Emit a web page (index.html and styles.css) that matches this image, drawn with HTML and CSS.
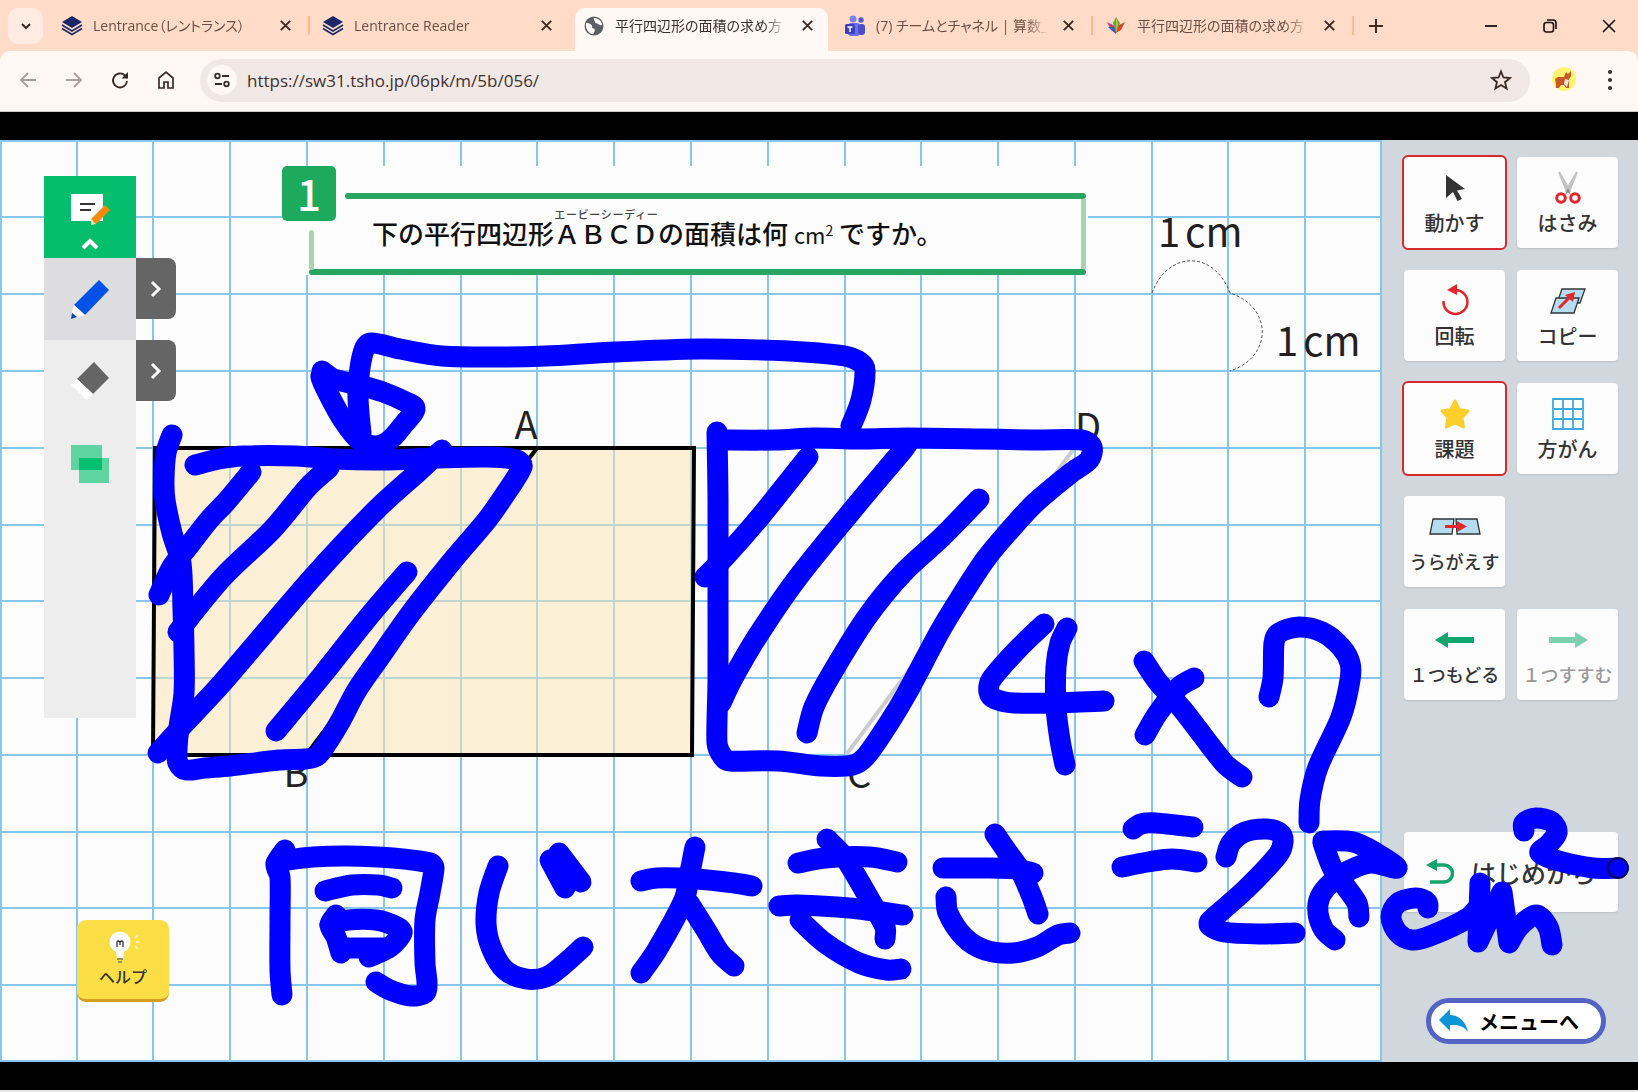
FILE: index.html
```html
<!DOCTYPE html>
<html lang="ja">
<head>
<meta charset="utf-8">
<meta name="viewport" content="width=device-width, initial-scale=1">
<title>平行四辺形の面積の求め方</title>
<link rel="stylesheet" href="styles.css">
</head>
<body>
<svg width="0" height="0" class="defs" aria-hidden="true">
  <symbol id="i-close" viewBox="0 0 16 16"><path d="M3 3L13 13M13 3L3 13" fill="none" stroke="currentColor" stroke-width="2"/></symbol>
  <symbol id="i-layers" viewBox="0 0 22 22"><path d="M11 1L21 7L11 13L1 7Z" fill="#1b2a66"/><path d="M1 10L11 16L21 10M1 13.500L11 19.500L21 13.500" fill="none" stroke="#1b2a66" stroke-width="1.600"/></symbol>
</svg>

<header class="browser">
  <div class="tabstrip">
    <button class="tab-search" aria-label="タブを検索"><svg viewBox="0 0 16 16" width="16" height="16"><path d="M4 6L8 10L12 6" fill="none" stroke="currentColor" stroke-width="2"/></svg></button>
    <nav class="tabs" aria-label="タブ">
      <div class="tab"><svg class="favicon"><use href="#i-layers"/></svg><a class="tab-title" href="#">Lentrance（レントランス）</a><button class="tab-close" aria-label="閉じる"><svg><use href="#i-close"/></svg></button></div>
      <div class="tab no-sep"><svg class="favicon"><use href="#i-layers"/></svg><a class="tab-title" href="#">Lentrance Reader</a><button class="tab-close" aria-label="閉じる"><svg><use href="#i-close"/></svg></button></div>
      <div class="tab active"><svg class="favicon" viewBox="0 0 22 22"><circle cx="11" cy="11" r="9.500" fill="#5b6066"/><path d="M3 8C7 8 10 10 9 13C12 13 13 16 10 19C6 19 2 14 3 8ZM11 3C10 5 13 6 12 8C15 8 16 11 19 10C19 6 15 3 11 3Z" fill="#fff8f5"/></svg><a class="tab-title" href="#">平行四辺形の面積の求め方</a><button class="tab-close" aria-label="閉じる"><svg><use href="#i-close"/></svg></button></div>
      <div class="tab"><svg class="favicon" viewBox="0 0 22 22"><circle cx="9" cy="4" r="3.500" fill="#7b83eb"/><circle cx="17" cy="5" r="2.700" fill="#5059c9"/><rect x="4" y="8" width="12" height="13" rx="3" fill="#6b6ff0"/><rect x="14" y="9" width="7" height="11" rx="3" fill="#4a50c8"/><rect x="1" y="9" width="10" height="10" rx="1.500" fill="#3d3fc0"/><path d="M3.500 12H8.500M6 12V17" stroke="#fff" stroke-width="1.500"/></svg><a class="tab-title" href="#">(7) チームとチャネル | 算数_</a><button class="tab-close" aria-label="閉じる"><svg><use href="#i-close"/></svg></button></div>
      <div class="tab"><svg class="favicon" viewBox="0 0 22 22"><path d="M2 7L10 11L11 18L6 15Z" fill="#c43b8f"/><path d="M3 12L11 12L11 19Z" fill="#3a57c4"/><path d="M20 7L12 11L11 18L16 15Z" fill="#d9432f"/><path d="M11 2L15 8L11 18L8 8Z" fill="#49b348"/><path d="M11 2L13 9L11 18Z" fill="#e9b52c"/></svg><a class="tab-title" href="#">平行四辺形の面積の求め方</a><button class="tab-close" aria-label="閉じる"><svg><use href="#i-close"/></svg></button></div>
    </nav>
    <button class="new-tab" aria-label="新しいタブ"><svg viewBox="0 0 16 16" width="16" height="16"><path d="M8 1V15M1 8H15" stroke="currentColor" stroke-width="2"/></svg></button>
    <div class="window-controls">
      <button aria-label="最小化"><svg viewBox="0 0 16 16"><path d="M2 8H14" stroke="currentColor" stroke-width="1.800"/></svg></button>
      <button aria-label="元に戻す"><svg viewBox="0 0 16 16"><rect x="2" y="4.500" width="9.500" height="9.500" rx="2.500" fill="none" stroke="currentColor" stroke-width="1.600"/><path d="M5 2H11C13 2 14 3 14 5V11" fill="none" stroke="currentColor" stroke-width="1.600"/></svg></button>
      <button aria-label="ウィンドウを閉じる"><svg viewBox="0 0 16 16"><path d="M2 2L14 14M14 2L2 14" stroke="currentColor" stroke-width="1.600"/></svg></button>
    </div>
  </div>
  <div class="toolbar">
    <button class="nav-btn dim" aria-label="戻る"><svg viewBox="0 0 20 20"><path d="M18 10H3M10 3L3 10L10 17" fill="none" stroke="currentColor" stroke-width="1.800"/></svg></button>
    <button class="nav-btn dim" aria-label="進む"><svg viewBox="0 0 20 20"><path d="M2 10H17M10 3L17 10L10 17" fill="none" stroke="currentColor" stroke-width="1.800"/></svg></button>
    <button class="nav-btn" aria-label="再読み込み"><svg viewBox="0 0 20 20"><path d="M17 11A7 7 0 1 1 15 5.500L17 7.500" fill="none" stroke="currentColor" stroke-width="1.900"/><path d="M18 2V8.500H11.500Z" fill="currentColor"/></svg></button>
    <button class="nav-btn" aria-label="ホーム"><svg viewBox="0 0 20 20"><path d="M3 18V8L10 2L17 8V18H12V12H8V18Z" fill="none" stroke="currentColor" stroke-width="1.700"/></svg></button>
    <div class="omnibox">
      <button class="site-info" aria-label="サイト情報"><svg viewBox="0 0 18 18"><circle cx="4.500" cy="5" r="2.300" fill="none" stroke="currentColor" stroke-width="1.800"/><path d="M9 5H16M2 13H9" stroke="currentColor" stroke-width="2"/><circle cx="13.500" cy="13" r="2.300" fill="none" stroke="currentColor" stroke-width="1.800"/></svg></button>
      <input class="address" type="text" aria-label="アドレス" value="https://sw31.tsho.jp/06pk/m/5b/056/">
      <button class="bookmark" aria-label="ブックマーク"><svg viewBox="0 0 22 22"><path d="M11 2.500L13.400 8.500L20 9L15 13.200L16.600 19.500L11 16L5.400 19.500L7 13.200L2 9L8.600 8.500Z" fill="none" stroke="currentColor" stroke-width="1.800"/></svg></button>
    </div>
    <button class="profile" aria-label="プロフィール"><svg viewBox="0 0 26 26"><circle cx="13" cy="12" r="12" fill="#fdf571"/><path d="M4 12L7 10H13L15 5L17 7L20 4L20 9L18 12L18 21H15L13 18H10L8 21H5L5 17Z" fill="#c8582a"/><path d="M14 12L18 13L16 20L13 17Z" fill="#f4e4d4"/></svg></button>
    <button class="kebab" aria-label="メニュー"><svg viewBox="0 0 6 22"><circle cx="3" cy="3" r="2"/><circle cx="3" cy="11" r="2"/><circle cx="3" cy="19" r="2"/></svg></button>
  </div>
</header>

<main class="stage">
  <section class="board">
    <svg class="board-art" viewBox="0 140 1382 922" preserveAspectRatio="xMinYMin slice">
      <path class="gridlines" d="M1 140V1062M77 140V1062M153 140V1062M230 140V1062M307 140V1062M384 140V1062M461 140V1062M537 140V1062M614 140V1062M691 140V1062M768 140V1062M845 140V1062M921 140V1062M998 140V1062M1075 140V1062M1152 140V1062M1228 140V1062M1305 140V1062M1381 140V1062M0 141H1382M0 217H1382M0 294H1382M0 371H1382M0 448H1382M0 525H1382M0 601H1382M0 678H1382M0 755H1382M0 832H1382M0 908H1382M0 985H1382M0 1061H1382"/>
      <path d="M155 448H694L692 755H153Z" fill="#f9e4b0" fill-opacity=".5"/>
      <path d="M155 448H694L692 755H153ZM537 448L306 755" fill="none" stroke="#000" stroke-width="4"/>
      <path d="M1073 450L846 755" stroke="#ccc" stroke-width="4"/>
      <g class="point">
        <text x="526" y="439">A</text><text x="296" y="787">B</text><text x="859" y="788">C</text><text x="1088" y="441">D</text>
      </g>
      <path class="arc" d="M1152 293C1168 250 1214 250 1230 293C1273 307 1273 357 1230 371"/>
      <g class="unit">
        <text x="1158" y="247">1</text><text x="1185" y="247">cm</text><text x="1276" y="356">1</text><text x="1303" y="356">cm</text>
      </g>
    </svg>

    <div class="question">
      <span class="number">1</span>
      <i class="line top"></i><i class="line bottom"></i><i class="side left"></i><i class="side right"></i>
      <p>下の平行四辺形<ruby>ＡＢＣＤ<rt>エービーシーディー</rt></ruby>の面積は何 <span class="cm">cm<sup>2</sup></span> ですか。</p>
    </div>

    <div class="pen-tools">
      <button class="pen-toggle" aria-label="ノート"><svg viewBox="0 0 92 81"><rect x="27" y="17" width="32" height="27" fill="#fff"/><path d="M36 27H51M36 33H47" stroke="#333" stroke-width="2"/><path d="M61 28L66 33L52 47L47 42Z" fill="#f7890b"/><path d="M47 42L52 47L47 48Z" fill="#fde2b0"/><path d="M39 71L46 64L53 71" fill="none" stroke="#fff" stroke-width="4"/></svg></button>
      <div class="pen-row selected"><button class="pen-btn" aria-label="ペン"><svg viewBox="0 0 92 81"><path d="M55 21L65 31L41 56L30 46Z" fill="#0351e6"/><path d="M30 46L41 56L33 58L28 53Z" fill="#fff"/><path d="M28 54L33 58L27 60Z" fill="#0846ad"/></svg></button><button class="more" aria-label="ペンの設定"><svg viewBox="0 0 16 20"><path d="M4 3L11 10L4 17" fill="none" stroke="#fff" stroke-width="3"/></svg></button></div>
      <div class="pen-row"><button class="pen-btn" aria-label="消しゴム"><svg viewBox="0 0 92 81"><path d="M50 21L65 37L49 53L33 38Z" fill="#656565"/><path d="M33 38L49 53L43 59L27 44Z" fill="#fff"/></svg></button><button class="more" aria-label="消しゴムの設定"><svg viewBox="0 0 16 20"><path d="M4 3L11 10L4 17" fill="none" stroke="#fff" stroke-width="3"/></svg></button></div>
      <div class="pen-row"><button class="pen-btn" aria-label="図形"><svg viewBox="0 0 92 81"><path d="M27 22H58V47H27Z" fill="#5ed5a0"/><path d="M35 35H65V60H35Z" fill="#5ed5a0"/><path d="M35 35H58V47H35Z" fill="#05bf70"/></svg></button></div>
    </div>

    <button class="help"><svg viewBox="3 0 48 36" width="48" height="36"><circle cx="24" cy="14" r="10.500" fill="#fff"/><path d="M19 20H29L27 30H21Z" fill="#fff"/><path d="M21 19V14Q22 12 24 14Q26 12 27 14V19M24 14V17" fill="none" stroke="#333" stroke-width="1.300"/><path d="M21 31H27M22 34H26" stroke="#777" stroke-width="1.500"/><path d="M39 10L42 7M40 14H44M39 18L42 21" stroke="#fff3a6" stroke-width="2"/></svg>ヘルプ</button>
  </section>

  <aside class="panel">
    <div class="tools">
      <button class="tool on"><svg viewBox="0 0 52 36"><path d="M17 5L36 19L28 20.500L33 29L28.500 31L24 22L17 28Z" fill="#333"/></svg>動かす</button>
      <button class="tool"><svg viewBox="0 0 52 36"><path d="M17 2L28 21L25 22ZM35 2L24 21L27 22Z" fill="#bcbcbc" stroke="#c4c4c4" stroke-width="2"/><path d="M23 25L26 18L29 25L26 22Z" fill="#888"/><ellipse cx="19" cy="28" rx="4.300" ry="4.300" fill="none" stroke="#e3262c" stroke-width="3"/><ellipse cx="33" cy="28" rx="4.300" ry="4.300" fill="none" stroke="#e3262c" stroke-width="3"/></svg>はさみ</button>
      <button class="tool"><svg viewBox="0 0 52 36"><path d="M14.500 18A12 12 0 1 0 26 7" fill="none" stroke="#e3262c" stroke-width="2.500"/><path d="M28 1V12L18 7Z" fill="#e3262c"/></svg>回転</button>
      <button class="tool"><svg viewBox="0 0 52 36"><path d="M20 6H43L38 20H15Z" fill="#b5dcf0" stroke="#333" stroke-width="1.300"/><path d="M14 15H37L32 30H9Z" fill="#b5dcf0" stroke="#333" stroke-width="1.300"/><path d="M17 25L28 14" stroke="#e3262c" stroke-width="3"/><path d="M33 9L31 19L23 12Z" fill="#e3262c"/></svg>コピー</button>
      <button class="tool on"><svg viewBox="0 0 52 36"><path d="M26 5L30 13.500L39 15L33 21.500L34.500 31L26 27L17.500 31L19 21.500L13 15L22 13.500Z" fill="#fccf2d" stroke="#fccf2d" stroke-width="3" stroke-linejoin="round"/></svg>課題</button>
      <button class="tool"><svg viewBox="0 0 52 36"><path d="M11 3H41V33H11ZM21 3V33M31 3V33M11 13H41M11 23H41" fill="none" stroke="#3fa9dc" stroke-width="1.800"/></svg>方がん</button>
      <button class="tool small"><svg viewBox="0 0 52 36"><path d="M4 10H25L23 25H1ZM27 10H48L51 25H28Z" fill="#b5dcf0" stroke="#333" stroke-width="1.300"/><path d="M16 17.500H30" stroke="#e3262c" stroke-width="3"/><path d="M28 12L38 17.500L28 23Z" fill="#e3262c"/></svg>うらがえす</button>
      <button class="tool small back"><svg viewBox="0 0 52 36"><path d="M6 18L19 10V15H45V21H19V26Z" fill="#12a56e"/></svg>１つもどる</button>
      <button class="tool small" disabled><svg viewBox="0 0 52 36"><path d="M46 18L33 10V15H7V21H33V26Z" fill="#7fcfb0"/></svg>１つすすむ</button>
    </div>
    <button class="reset"><svg viewBox="0 0 28 28" width="28" height="28"><path d="M9 7H18A8 8 0 0 1 18 24H4" fill="none" stroke="#12a56e" stroke-width="3.500"/><path d="M11 1V13L0 7Z" fill="#12a56e"/></svg>はじめから</button>
    <a class="menu" href="#"><svg viewBox="0 0 30 24" width="30" height="24"><path d="M0 11L11 0V6C20 6 27 13 29 23C24 16 18 16 11 16V22Z" fill="#0a95d8"/></svg>メニューへ</a>
  </aside>

  <svg class="ink" id="ink" viewBox="0 140 1638 922" preserveAspectRatio="xMinYMin slice"></svg>
</main>
<div class="taskbar-edge"></div>
<script src="ink.js"></script>
</body>
</html>
```

FILE: styles.css
```css
* { box-sizing: border-box; }

body {
  margin: 0;
  min-height: 100vh;
  display: flex;
  flex-direction: column;
  background: #000;
  font-family: "Noto Sans", "Noto Sans CJK JP", sans-serif;
  color: #333;
}

button {
  margin: 0;
  padding: 0;
  border: 0;
  background: none;
  font: inherit;
  color: inherit;
  display: flex;
  align-items: center;
  justify-content: center;
}

a { color: inherit; text-decoration: none; }
.defs { position: absolute; }

/* Browser frame */
.browser { background: #ffdbc8; border-bottom: 1px solid #cfc5c2; color: #3a2a24; }
.tabstrip { display: flex; height: 51px; padding: 8px 0 0 8px; }
.tab-search { width: 35px; height: 36px; border-radius: 10px; background: #ffebe1; margin-right: 6px; }
.tabs { display: flex; flex: 0 1 1305px; min-width: 0; }
.tab {
  flex: 1 1 0;
  min-width: 0;
  height: 43px;
  padding: 0 17px 8px 12px;
  display: flex;
  align-items: center;
  position: relative;
}
.tab::after { content: ""; position: absolute; right: 0; top: 8px; width: 2px; height: 19px; background: #ffb98c; }
.tab.no-sep::after, .tab.active::after { display: none; }
.tab.active { background: #fff8f5; border-radius: 10px 10px 0 0; margin: 0 4px; padding: 0 13px 8px 8px; }
.favicon { width: 22px; height: 22px; flex: none; margin-right: 10px; }
.tab-title {
  flex: 1;
  min-width: 0;
  overflow: hidden;
  white-space: nowrap;
  font-family: "Open Sans", "Noto Sans CJK JP", sans-serif;
  font-size: 14px;
  line-height: 24px;
  font-feature-settings: "palt";
  color: #6a5046;
  -webkit-mask-image: linear-gradient(90deg, #000 86%, transparent);
  mask-image: linear-gradient(90deg, #000 86%, transparent);
}
.active .tab-title { color: #3a302c; }
.tab-close { width: 16px; height: 16px; margin-left: 11px; flex: none; }
.tab-close svg { width: 15px; height: 15px; }
.new-tab { width: 44px; height: 35px; }
.window-controls { margin-left: auto; display: flex; height: 35px; color: #111; }
.window-controls button { width: 59px; }
.window-controls svg { width: 16px; height: 16px; }

.toolbar {
  display: flex;
  align-items: center;
  height: 60px;
  padding: 0 12px 2px 5px;
  background: #fff8f5;
  border-radius: 10px 10px 0 0;
}
.nav-btn { width: 46px; height: 40px; }
.nav-btn svg { width: 20px; height: 20px; }
.nav-btn.dim { color: #a99f9b; }
.omnibox {
  flex: 1;
  min-width: 0;
  height: 43px;
  margin-left: 11px;
  padding: 0 18px 0 7px;
  display: flex;
  align-items: center;
  border-radius: 22px;
  background: #f1e7e4;
}
.site-info { width: 30px; height: 30px; border-radius: 15px; background: #fff8f5; flex: none; }
.site-info svg { width: 18px; height: 18px; }
.address {
  flex: 1;
  min-width: 0;
  border: 0;
  padding: 0 0 0 10px;
  background: none;
  font-family: "Open Sans", sans-serif;
  font-size: 17px;
  color: #3d3230;
  outline: none;
}
.bookmark svg { width: 22px; height: 22px; }
.profile { margin-left: 21px; }
.profile svg { width: 26px; height: 26px; }
.kebab { width: 32px; margin-left: 17px; }
.kebab svg { width: 6px; height: 22px; fill: #3a2a24; }

/* Lesson screen */
.stage { flex: 1; margin: 28px 0; display: flex; position: relative; overflow: hidden; min-height: 860px; }
.board { flex: 1; min-width: 0; position: relative; overflow: hidden; background: #fcfcfd; }
.board-art, .ink { position: absolute; left: 0; top: 0; width: 100%; height: 100%; }
.ink { pointer-events: none; fill: none; stroke: #0000ff; stroke-width: 21; stroke-linecap: round; stroke-linejoin: round; }
.ink .cursor { fill: #0000ff; stroke: #0a0a50; stroke-width: 2; }
.gridlines { stroke: #86c7ea; stroke-width: 2; fill: none; }
.point { font: 38px "Noto Sans CJK JP", sans-serif; text-anchor: middle; fill: #222; }
.unit { font: 40px "Noto Sans CJK JP", sans-serif; fill: #231f20; }
.arc { fill: none; stroke: #555; stroke-width: 1; stroke-dasharray: 3 2; }

.question { position: absolute; left: 282px; top: 26px; width: 806px; height: 109px; background: #fcfcfd; }
.number {
  position: absolute;
  left: 0;
  top: 0;
  width: 54px;
  height: 55px;
  border-radius: 5px;
  background: #1daa5d;
  color: #fff;
  font: 500 42px/54px "Noto Sans CJK JP", sans-serif;
  text-align: center;
}
.line { position: absolute; right: 2px; height: 6px; border-radius: 3px; background: #27a561; }
.line.top { left: 63px; top: 27px; }
.line.bottom { left: 27px; top: 103px; }
.side { position: absolute; width: 5px; background: #a9d4ae; }
.side.left { left: 27px; top: 64px; height: 40px; border-radius: 3px; }
.side.right { right: 2px; top: 33px; height: 70px; }
.question p {
  margin: 0;
  position: absolute;
  left: 90px;
  top: 43px;
  white-space: nowrap;
  font: 500 26px/40px "Noto Sans CJK JP", sans-serif;
  color: #111;
}
.question rt { font-size: 11px; line-height: 12px; color: #444; }
.question sup { font-size: 14px; line-height: 0; }
.question .cm { font-size: 22px; font-weight: 400; }

.pen-tools { position: absolute; left: 44px; top: 36px; width: 92px; height: 542px; background: #ededed; }
.pen-toggle { width: 92px; height: 82px; background: #04bd6d; }
.pen-toggle svg, .pen-btn svg { width: 92px; height: 81px; }
.pen-row { display: flex; align-items: flex-start; width: 132px; height: 82px; }
.pen-btn { width: 92px; height: 82px; }
.selected .pen-btn { background: #dddcde; }
.more { width: 40px; height: 61px; border-radius: 0 8px 8px 0; background: #656565; }
.more svg { width: 16px; height: 20px; }

.help {
  position: absolute;
  left: 77px;
  bottom: 60px;
  width: 92px;
  height: 82px;
  padding-top: 8px;
  flex-direction: column;
  justify-content: flex-start;
  border-radius: 9px;
  border-bottom: 3px solid #d39f1c;
  background: #fbdd45;
  font: 500 16px/24px "Noto Sans CJK JP", sans-serif;
  color: #333;
}

.panel {
  flex: none;
  width: 256px;
  padding: 17px 20px 18px 22px;
  display: flex;
  flex-direction: column;
  background: #d0d8de;
  font-family: "Noto Sans CJK JP", sans-serif;
  font-weight: 500;
}
.tools { display: grid; grid-template-columns: 101px 101px; gap: 22px 12px; }
.tool {
  height: 91px;
  padding-top: 13px;
  flex-direction: column;
  justify-content: flex-start;
  gap: 3px;
  border-radius: 4px;
  background: #fcfcfd;
  box-shadow: 0 1px 2px #b9bec2;
  font-size: 20px;
  line-height: 28px;
  white-space: nowrap;
}
.tool svg { width: 52px; height: 36px; flex: none; }
.tool.on { outline: 2px solid #d62a30; box-shadow: none; }
.tool.small { font-size: 18px; line-height: 26px; }
.tool.back { grid-column: 1; }
.tool:disabled { color: #999; }
.reset {
  height: 80px;
  margin: auto 0 86px;
  gap: 17px;
  border-radius: 4px;
  background: #fcfcfd;
  box-shadow: 0 1px 2px #b9bec2;
  font-size: 25px;
}
.menu {
  width: 180px;
  height: 46px;
  margin-left: 22px;
  padding-left: 8px;
  display: flex;
  align-items: center;
  gap: 10px;
  border: 5px solid #5464c5;
  border-radius: 23px;
  background: #fff;
  font-size: 20px;
  font-weight: 700;
  color: #000;
}
.taskbar-edge { height: 2px; background: #e8e8e8; }
```

FILE: ink.js
```js
// Pen strokes on the board, each one a list of x,y points.
const strokes = [
  // arrow
  "851,426 861,400 865,370 860,362 845,356 804,352 762,350 699,349 616,352 546,356 505,357 442,356 400,349 370,343 362,357 358,390 359,413 361,433",
  "326,374 321,377 329,395 343,420 359,440 376,446 390,440 404,424 415,409 406,402 383,392 359,385 334,379 322,371",
  // left parallelogram
  "172,435 166,453 164,480 165,500 172,533 181,563 183,610 184,650 184,693 179,727 177,750 178,763 186,770 205,768 230,766 279,760 306,759 317,756 327,743 341,720 357,690 380,657 411,613 453,560 487,520 508,490 522,467 517,460 487,457 435,458 383,460 334,459 296,456 244,456 219,459 195,465",
  "251,472 226,502 209,520 188,547 172,567 159,595",
  "329,468 308,487 272,530 223,577 178,632",
  "442,450 418,472 376,510 313,577 223,682 185,723 158,753",
  "407,572 366,620 324,673 276,731",
  // right parallelogram
  "717,432 718,500 718,600 718,680 717,743 723,757 730,761 778,761 821,766 853,765 867,755 889,723 907,693 939,633 957,603 985,560 1010,530 1035,503 1071,473 1089,460 1092,447 1082,440 1033,440 981,439 908,438 859,439 814,438 776,440 717,440",
  "808,457 760,517 725,557 705,577",
  "908,443 903,450 850,513 796,580 757,637 732,680 721,703",
  "979,499 942,537 903,573 867,617 832,673 814,707 807,733",
  // 4
  "1044,624 1017,650 991,680 989,692 995,699 1014,703 1053,703 1104,701",
  "1067,628 1060,643 1056,667 1056,707 1060,740 1065,765",
  // ×
  "1144,661 1158,682 1183,710 1224,763 1242,777",
  "1194,678 1179,687 1158,713 1145,735",
  // 7
  "1269,697 1273,678 1274,643 1279,633 1299,627 1322,632 1341,647 1350,663 1350,680 1341,717 1318,767 1310,800 1309,823",
  // =
  "1133,829 1141,824 1156,823 1193,827",
  "1122,867 1148,862 1172,859 1197,862",
  // 28
  "1226,857 1231,843 1245,832 1266,829 1280,833 1283,842 1278,855 1245,890 1210,921 1210,926 1224,932 1259,934 1295,933",
  "1323,841 1353,842 1376,853 1397,868 1371,863 1350,870 1332,882 1320,897 1318,913 1324,930 1335,940",
  "1323,843 1332,867 1343,883 1357,903 1359,917",
  // cm²
  "1428,908 1427,902 1416,898 1398,903 1391,917 1398,933 1412,940 1430,936 1468,918 1480,905",
  "1480,883 1478,942 1478,942 1502,892 1502,892 1509,943 1509,943 1519,927 1536,915 1548,927 1552,945",
  "1524,831 1524,823 1536,818 1552,822 1557,833 1548,845 1540,853 1559,861 1593,868 1618,868",
  // 同
  "285,850 276,864 280,877 280,920 280,970 282,995",
  "276,863 289,860 313,857 348,856 393,858 430,863 434,868 430,893 425,920 425,963 427,983 425,993 411,996 390,990 376,982",
  "325,891 352,885 378,885 392,888",
  "336,915 330,925 336,937 341,953",
  "330,925 348,920 376,920 397,927 402,933 390,947 369,957",
  "341,948 386,948",
  // じ
  "498,866 489,893 486,923 491,947 505,970 526,979 546,977 563,965 583,947",
  "559,853 581,882",
  "550,860 565,888",
  // 大
  "641,881 657,878 696,879 734,883 752,886",
  "695,847 689,877 684,900 657,950 641,973",
  "689,903 706,930 720,953 734,966",
  // き
  "798,863 825,858 870,857 897,862",
  "779,906 797,905 849,908 903,915",
  "827,839 845,858 870,900 885,927 885,939",
  "800,920 825,943 859,963 887,970 901,969",
  // さ
  "943,868 985,868 1016,869 1033,873",
  "995,834 1006,850 1020,870 1032,897 1038,914",
  "946,897 948,913 964,937 985,950 1013,953 1037,947 1058,935 1070,933"
];

const ns = "http://www.w3.org/2000/svg";
const ink = document.getElementById("ink");

// Catmull-Rom curve through the points, as cubic segments.
function curve(list) {
  const p = list.split(" ").map(s => s.split(",").map(Number));
  let d = "M" + p[0].join(" ");
  for (let i = 0; i < p.length - 1; i++) {
    const a = p[i - 1] || p[i], b = p[i], c = p[i + 1], e = p[i + 2] || c;
    const len = (u, v) => Math.hypot(u[0] - v[0], u[1] - v[1]);
    const s = len(b, c);
    // handles never grow past a third of their own segment
    const h = (u, v) => { const l = len(u, v); return l ? Math.min(1 / 6, s / 3 / l) : 0; };
    const k1 = h(a, c), k2 = h(b, e);
    d += "C" + [b[0] + (c[0] - a[0]) * k1, b[1] + (c[1] - a[1]) * k1,
                c[0] - (e[0] - b[0]) * k2, c[1] - (e[1] - b[1]) * k2, c[0], c[1]].join(" ");
  }
  return d;
}

for (const s of strokes) {
  const path = document.createElementNS(ns, "path");
  path.setAttribute("d", curve(s));
  ink.append(path);
}

const dot = document.createElementNS(ns, "circle");
dot.setAttribute("class", "cursor");
dot.setAttribute("cx", 1618);
dot.setAttribute("cy", 868);
dot.setAttribute("r", 10);
ink.append(dot);
```
